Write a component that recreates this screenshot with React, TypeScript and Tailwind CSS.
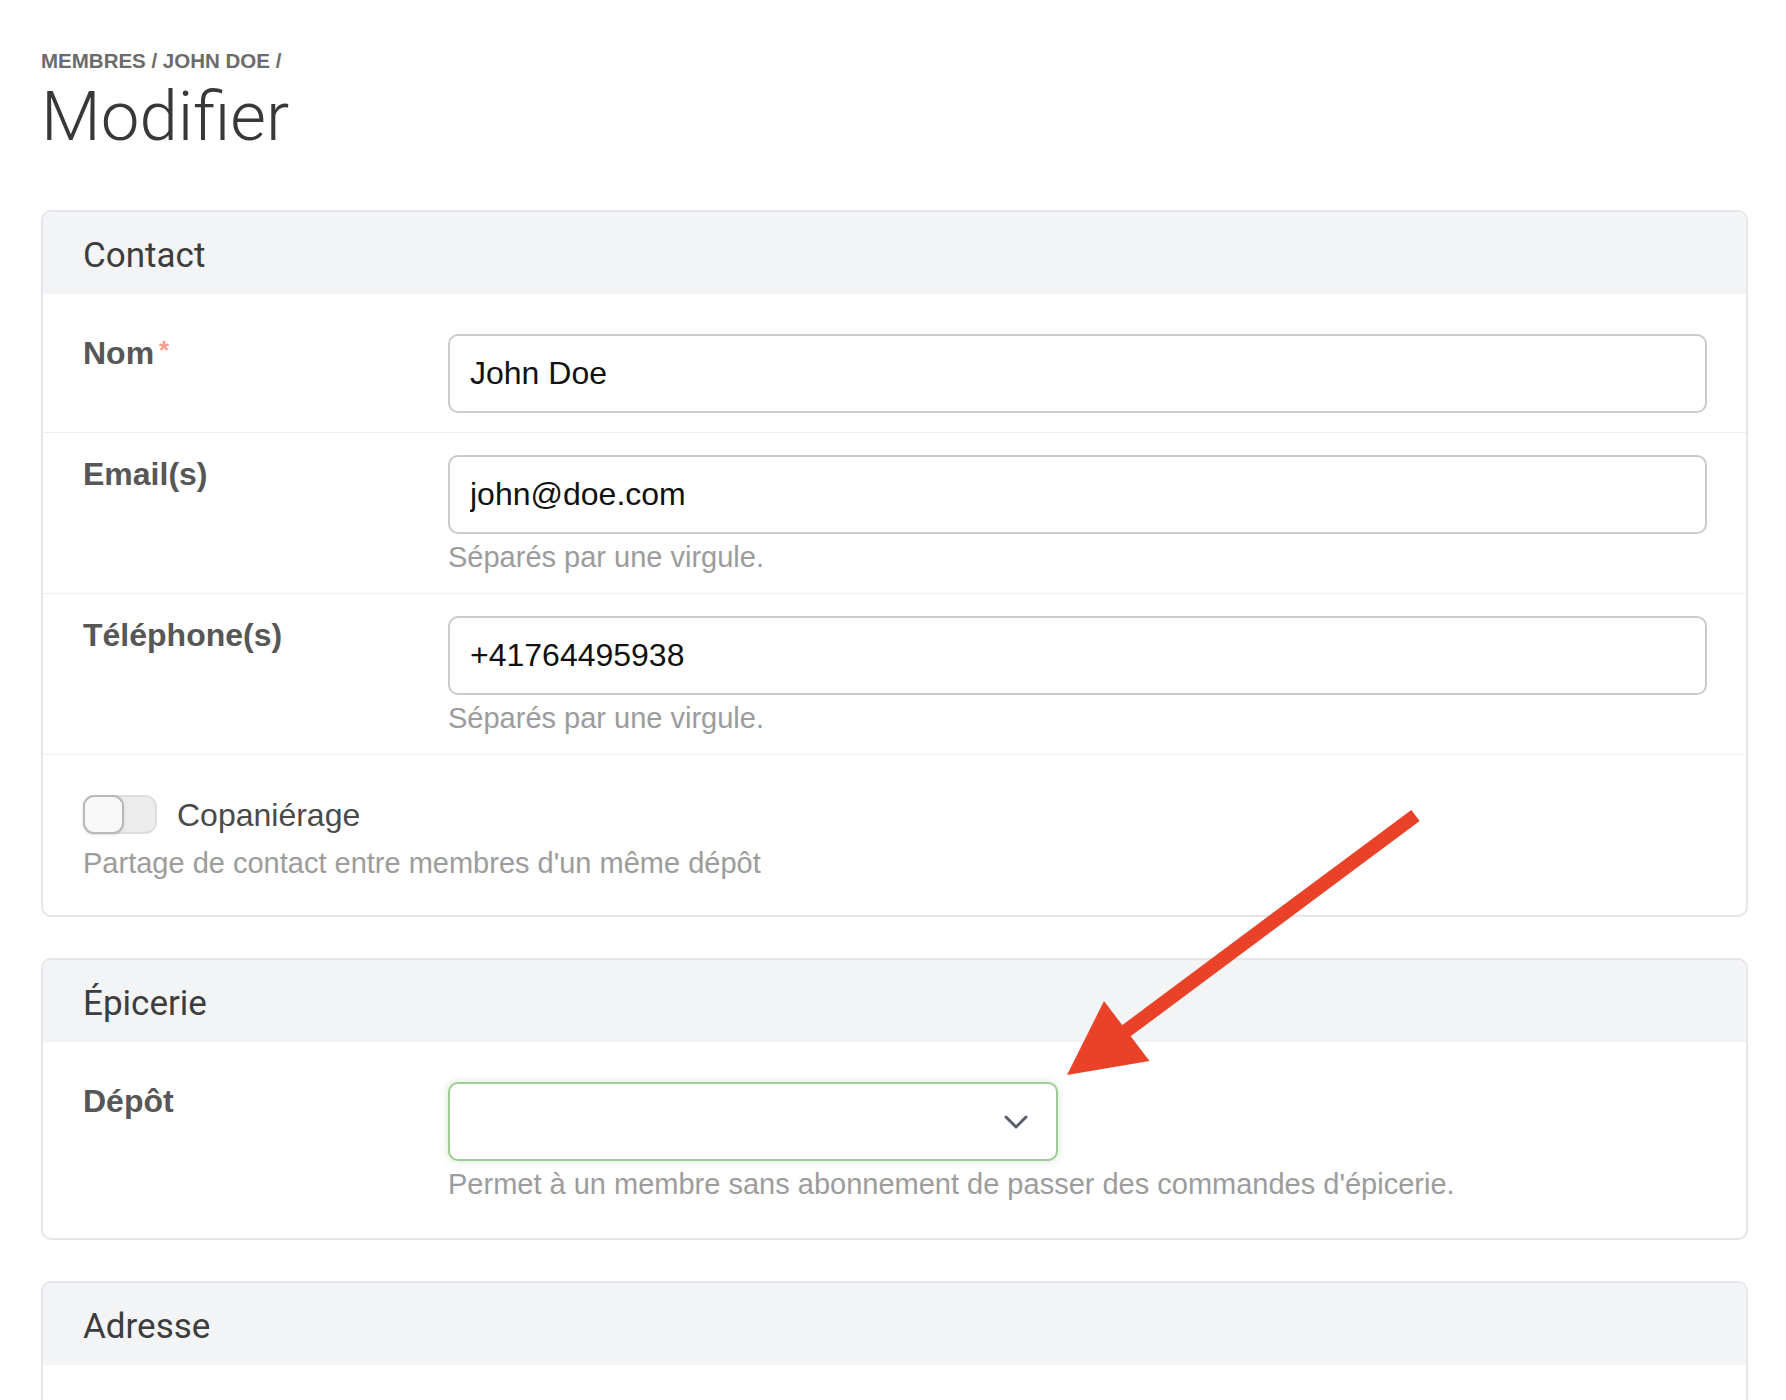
import React from 'react';

const body = { fontFamily: '"Liberation Sans", Arial, sans-serif' };
const heading = { fontFamily: 'Roboto, "Liberation Sans", sans-serif' };

const Card: React.FC<{ title: string; children: React.ReactNode }> = ({ title, children }) => (
  <section className="rounded-[10px] border-2 border-[#e6e6ea] bg-white overflow-hidden">
    <div className="h-[82px] bg-[#f3f4f6] flex items-center px-[40px] pt-1">
      <h2 style={heading} className="text-[35px] leading-none text-[#3d3d3d]">
        {title}
      </h2>
    </div>
    <div className="py-[18px]">{children}</div>
  </section>
);

const Help: React.FC<{ children: React.ReactNode }> = ({ children }) => (
  <p className="mt-[6px] text-[29px] leading-[34px] text-[#9c9c9c]">{children}</p>
);

const Row: React.FC<{
  label: string;
  required?: boolean;
  last?: boolean;
  children: React.ReactNode;
}> = ({ label, required, last, children }) => (
  <div
    className={`grid grid-cols-[365px_1fr] pl-[40px] pr-[39px] pt-[22px] pb-[19px] ${
      last ? '' : 'border-b border-[#efeff1]'
    }`}
  >
    <label className="text-[32px] leading-[38px] font-bold text-[#575757]">
      {label}
      {required && (
        <span className="relative -top-[5px] ml-[5px] text-[26px] font-bold text-[#f49d8f]">*</span>
      )}
    </label>
    <div>{children}</div>
  </div>
);

const TextInput: React.FC<{ value: string }> = ({ value }) => (
  <input
    readOnly
    value={value}
    className="w-full h-[79px] rounded-[10px] border-2 border-[#cbcbcb] bg-white px-[20px] text-[32px] text-[#111] outline-none"
    style={body}
  />
);

export default function App() {
  return (
    <div style={body} className="relative min-h-[1400px] bg-white pl-[41px] pr-[38px] pt-[49px] pb-10">
      <div className="text-[20.5px] leading-[24px] font-bold uppercase text-[#6b6b6b]">
        Membres / John Doe /
      </div>
      <h1
        style={heading}
        className="mt-[9px] text-[69px] leading-[69px] font-light text-[#383838]"
      >
        Modifier
      </h1>

      <div className="mt-[59px] space-y-[41px]">
        <Card title="Contact">
          <Row label="Nom" required>
            <TextInput value="John Doe" />
          </Row>
          <Row label="Email(s)">
            <TextInput value="john@doe.com" />
            <Help>Séparés par une virgule.</Help>
          </Row>
          <Row label="Téléphone(s)">
            <TextInput value="+41764495938" />
            <Help>Séparés par une virgule.</Help>
          </Row>
          <div className="pl-[40px] pr-[39px] pt-[40px] pb-[17px]">
            <div className="flex items-center gap-[20px]">
              <button
                type="button"
                className="relative w-[74px] h-[39px] rounded-[12px] border-2 border-[#dedede] bg-[#ececec]"
              >
                <span className="absolute -left-[2px] -top-[2px] w-[41px] h-[39px] rounded-[11px] border-2 border-[#b9b9bb] bg-[#f8f8f8] shadow-sm" />
              </button>
              <span className="text-[32px] leading-[38px] text-[#4a4a4a]">Copaniérage</span>
            </div>
            <p className="mt-[12px] text-[29px] leading-[34px] text-[#9c9c9c]">
              Partage de contact entre membres d'un même dépôt
            </p>
          </div>
        </Card>

        <Card title="Épicerie">
          <Row label="Dépôt" last>
            <div className="relative w-[610px] h-[79px] rounded-[10px] border-2 border-[#9ecb96] bg-white shadow-[0_0_6px_2px_rgba(150,200,140,0.25)]">
              <svg
                className="absolute right-[28px] top-[31px]"
                width="24"
                height="14"
                viewBox="0 0 24 14"
                fill="none"
                stroke="#5b5f6c"
                strokeWidth="3"
                strokeLinecap="round"
                strokeLinejoin="round"
              >
                <polyline points="2,2 12,12 22,2" />
              </svg>
            </div>
            <Help>Permet à un membre sans abonnement de passer des commandes d'épicerie.</Help>
          </Row>
        </Card>

        <Card title="Adresse">
          <div className="h-[160px]" />
        </Card>
      </div>

      <svg
        className="absolute left-0 top-0 pointer-events-none"
        width="1786"
        height="1400"
        viewBox="0 0 1786 1400"
      >
        <line x1="1415.5" y1="815.5" x2="1122" y2="1034" stroke="#ea4228" strokeWidth="14" />
        <polygon points="1104,1001 1149.5,1061 1067,1075" fill="#ea4228" />
      </svg>
    </div>
  );
}
